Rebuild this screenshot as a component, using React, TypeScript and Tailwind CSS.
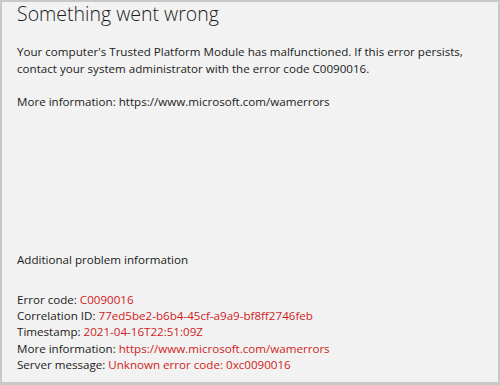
import React from 'react';

const details = [
  { label: 'Error code:', value: 'C0090016' },
  { label: 'Correlation ID:', value: '77ed5be2-b6b4-45cf-a9a9-bf8ff2746feb' },
  { label: 'Timestamp:', value: '2021-04-16T22:51:09Z' },
  { label: 'More information:', value: 'https://www.microsoft.com/wamerrors' },
  { label: 'Server message:', value: 'Unknown error code: 0xc0090016' },
];

const App = () => {
  return (
    <div
      className="w-[500px] h-[385px] bg-[#f2f2f2] border-2 border-b-[3px] border-[#c8c8c8] flex flex-col pl-[15px] pr-4 text-[#1b1b1b]"
      style={{ fontFamily: '"Open Sans", "Noto Sans", sans-serif' }}
    >
      {/* Title */}
      <h1 className="text-[19.5px] leading-[26px] font-light mt-[-1px]">Something went wrong</h1>

      {/* Message */}
      <p className="text-[11.6px] leading-[16.5px] mt-[17px]">
        Your computer's Trusted Platform Module has malfunctioned. If this error persists, contact your
        system administrator with the error code C0090016.
      </p>
      <p className="text-[11.6px] leading-[16.5px] mt-[16.5px]">
        More information: https://www.microsoft.com/wamerrors
      </p>

      {/* Additional info */}
      <div className="mt-auto mb-[9px] text-[11.6px]">
        <p className="leading-[16.5px] mb-[23px]">Additional problem information</p>
        {details.map((d) => (
          <div key={d.label} className="leading-[16.25px] whitespace-nowrap">
            {d.label} <span className="text-[#d01c1c]">{d.value}</span>
          </div>
        ))}
      </div>
    </div>
  );
};

export default App;
